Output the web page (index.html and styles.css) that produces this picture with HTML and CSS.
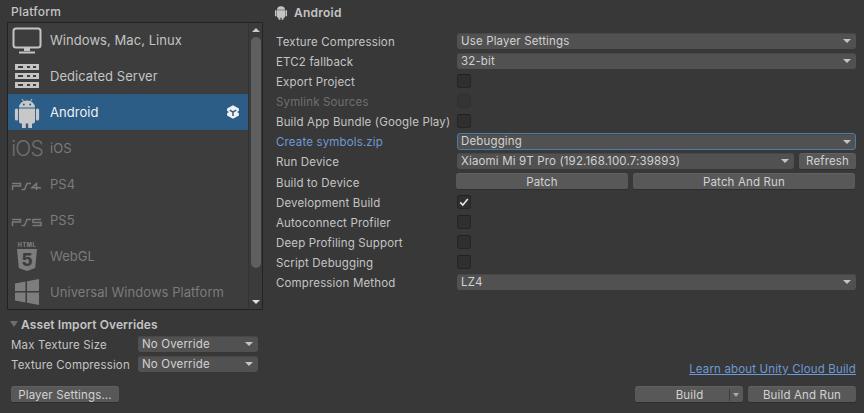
FILE: index.html
```html
<!DOCTYPE html>
<html lang="en">
<head>
<meta charset="utf-8">
<title>Build Settings</title>
<link rel="stylesheet" href="styles.css">
</head>
<body>
<div class="app">
  <aside class="left">
    <h2 class="platform-title">Platform</h2>
    <div class="list-box">
      <ul class="list">
        <li class="row">
          <svg class="ico" viewBox="0 0 32 32"><rect x="2.500" y="3.500" width="27" height="19" rx="2.500" fill="none" stroke="#c4c4c4" stroke-width="2"/><path d="M13 23h6v3h-6zM8 26.500h16v2H8z" fill="#c4c4c4"/></svg>
          <span>Windows, Mac, Linux</span>
        </li>
        <li class="row">
          <svg class="ico" viewBox="0 0 32 32" fill="#c4c4c4"><path fill-rule="evenodd" d="M4 4h24v6H4zM7 6v2h5V6zM16 6v2h3V6zM22 6v2h3V6zM4 13h24v6H4zM7 15v2h5v-2zM16 15v2h3v-2zM22 15v2h3v-2zM4 22h24v6H4zM7 24v2h5v-2zM16 24v2h3v-2zM22 24v2h3v-2z"/></svg>
          <span>Dedicated Server</span>
        </li>
        <li class="row active">
          <svg class="ico" viewBox="0 0 32 32" fill="#c8c8c8"><path d="M8 11.500a8 7 0 0 1 16 0zM8 12.500h16v13a2 2 0 0 1-2 2h-1v4a1.900 1.900 0 0 1-3.800 0v-4h-2.400v4a1.900 1.900 0 0 1-3.800 0v-4h-1a2 2 0 0 1-2-2zM5.500 12.500a1.600 1.600 0 0 1 1.600 1.600v8.800a1.600 1.600 0 0 1-3.200 0v-8.800a1.600 1.600 0 0 1 1.600-1.600zM26.500 12.500a1.600 1.600 0 0 1 1.600 1.600v8.800a1.600 1.600 0 0 1-3.200 0v-8.800a1.600 1.600 0 0 1 1.600-1.600z"/><path d="M11 3l2 3M21 3l-2 3" stroke="#c8c8c8" stroke-width="1"/><circle cx="12.800" cy="8.500" r="1" fill="#2c5d87"/><circle cx="19.200" cy="8.500" r="1" fill="#2c5d87"/></svg>
          <span>Android</span>
          <svg class="unity" viewBox="0 0 14 14"><path d="M7 .3 12.900 3.500V10.500L7 13.700 1.100 10.500V3.500z" fill="#f2f2f2"/><path d="M7 7.200V11M7 7.200 3.800 5.200M7 7.200 10.200 5.200" fill="none" stroke="#2c5d87" stroke-width="1.500"/><path d="M.8 5.700 3 7 .8 8.300zM13.200 5.700 11 7 13.200 8.300z" fill="#2c5d87"/></svg>
        </li>
        <li class="row dim">
          <span class="ios-mark">iOS</span>
          <span>iOS</span>
        </li>
        <li class="row dim">
          <svg class="ico wide" viewBox="0 0 32 10" fill="none" stroke="#7a7a7a" stroke-width="1.500"><path d="M1 1.500H9.500V4H1.500V8M20 1.500H16L13.500 7.500H10.500M25.500 8V1.500L21 5.700H30"/></svg>
          <span>PS4</span>
        </li>
        <li class="row dim">
          <svg class="ico wide" viewBox="0 0 32 10" fill="none" stroke="#7a7a7a" stroke-width="1.500"><path d="M1 1.500H9.500V4H1.500V8M20 1.500H16L13.500 7.500H10.500M30 1.500H22V4.500H30V7.500H21.500"/></svg>
          <span>PS5</span>
        </li>
        <li class="row dim">
          <svg class="ico" viewBox="0 0 32 32"><text class="html-mark" x="16" y="7" text-anchor="middle">HTML</text><path d="M6 9h20l-1.800 19L16 31l-8.200-3z" fill="#7d7d7d"/><text class="five-mark" x="16" y="26" text-anchor="middle">5</text></svg>
          <span>WebGL</span>
        </li>
        <li class="row dim">
          <svg class="ico" viewBox="0 0 32 32" fill="#7d7d7d"><path d="M4 7.500 14.500 5.500V15H4zM16 5.200 28 3V15H16zM4 16.500H14.500V26.500L4 24.500zM16 16.500H28V29L16 26.800z"/></svg>
          <span>Universal Windows Platform</span>
        </li>
      </ul>
      <div class="scrollbar">
        <span class="arrow up"></span>
        <span class="thumb"></span>
        <span class="arrow down"></span>
      </div>
    </div>
    <div class="overrides">
      <div class="fold"><span class="fold-tri"></span><strong>Asset Import Overrides</strong></div>
      <div class="ov-row"><label>Max Texture Size</label><div class="select ov"><span>No Override</span><i class="tri"></i></div></div>
      <div class="ov-row"><label>Texture Compression</label><div class="select ov"><span>No Override</span><i class="tri"></i></div></div>
    </div>
    <div class="left-foot"><button class="btn player">Player Settings...</button></div>
  </aside>

  <main class="right">
    <h2 class="target">
      <svg class="target-ico" viewBox="0 0 32 32" fill="#c4c4c4"><path d="M8 11.500a8 7 0 0 1 16 0zM8 12.500h16v13a2 2 0 0 1-2 2h-1v4h-3.800v-4h-2.400v4H11v-4h-1a2 2 0 0 1-2-2zM3.900 12.500h3.200v12H3.900zM24.900 12.500h3.200v12h-3.200z"/></svg>
      Android
    </h2>
    <div class="form">
      <div class="f-row"><label>Texture Compression</label><div class="select"><span>Use Player Settings</span><i class="tri"></i></div></div>
      <div class="f-row"><label>ETC2 fallback</label><div class="select"><span>32-bit</span><i class="tri"></i></div></div>
      <div class="f-row"><label>Export Project</label><span class="check"></span></div>
      <div class="f-row muted"><label>Symlink Sources</label><span class="check off"></span></div>
      <div class="f-row"><label>Build App Bundle (Google Play)</label><span class="check"></span></div>
      <div class="f-row"><label class="blue">Create symbols.zip</label><div class="select focus"><span>Debugging</span><i class="tri"></i></div></div>
      <div class="f-row"><label>Run Device</label><div class="select"><span>Xiaomi Mi 9T Pro (192.168.100.7:39893)</span><i class="tri"></i></div><button class="btn refresh">Refresh</button></div>
      <div class="f-row tall"><label>Build to Device</label><div class="btn-pair"><button class="btn patch">Patch</button><button class="btn patch-run">Patch And Run</button></div></div>
      <div class="f-row"><label>Development Build</label><span class="check"><svg viewBox="0 0 14 14"><path d="M3.200 7.400 5.800 10 10.800 4" fill="none" stroke="#e2e2e2" stroke-width="1.700"/></svg></span></div>
      <div class="f-row"><label>Autoconnect Profiler</label><span class="check"></span></div>
      <div class="f-row"><label>Deep Profiling Support</label><span class="check"></span></div>
      <div class="f-row"><label>Script Debugging</label><span class="check"></span></div>
      <div class="f-row"><label>Compression Method</label><div class="select"><span>LZ4</span><i class="tri"></i></div></div>
    </div>
    <div class="right-foot">
      <a class="learn" href="#">Learn about Unity Cloud Build</a>
      <div class="build-btns">
        <div class="btn build"><span class="build-label">Build</span><span class="build-sep"></span><i class="tri small"></i></div>
        <button class="btn build-run">Build And Run</button>
      </div>
    </div>
  </main>
</div>
</body>
</html>
```

FILE: styles.css
```css
* { box-sizing: border-box; }
html, body { margin: 0; padding: 0; }
body {
  width: 864px;
  height: 413px;
  overflow: hidden;
  background: #383838;
  color: #c4c4c4;
  font-family: Inter, "Liberation Sans", sans-serif;
  font-size: 11.500px;
  letter-spacing: .15px;
}
.app { display: flex; height: 413px; }

/* left column */
.left { width: 265px; margin-left: 7px; display: flex; flex-direction: column; flex: none; }
.platform-title { margin: 4px 0 0 4px; height: 18px; font-size: 12px; line-height: 16px; font-weight: 500; letter-spacing: .25px; color: #c4c4c4; }
.list-box { display: flex; width: 256px; height: 288px; border: 1px solid #232323; background: #3d3d3d; }
.list { list-style: none; margin: 0; padding: 0; flex: 1; min-width: 0; }
.row { display: flex; align-items: center; height: 36px; padding-left: 3px; font-size: 13px; letter-spacing: .05px; color: #c4c4c4; }
.row:first-child { height: 35px; }
.row:first-child span { padding-bottom: 2px; }
.row.active { background: #2c5d87; color: #f0f0f0; }
.row.dim { color: #7b7b7b; }
.ico { width: 32px; height: 32px; flex: none; margin-right: 7px; }
.ico.wide { height: 10px; margin-top: 6px; }
.unity { width: 14px; height: 14px; margin-left: auto; margin-right: 8px; }
.ios-mark { width: 32px; margin-right: 7px; font-size: 21px; font-weight: 300; letter-spacing: -.8px; text-align: center; flex: none; color: #6f6f6f; }
.html-mark { font-size: 5.500px; font-weight: 800; fill: #7d7d7d; letter-spacing: .6px; }
.five-mark { font-size: 17px; font-weight: 800; fill: #3d3d3d; }
.scrollbar { width: 14px; flex: none; position: relative; display: flex; flex-direction: column; align-items: center; background: #3b3b3b; border-left: 1px solid #333; }
.thumb { width: 10px; height: 231px; flex: none; margin-top: 1px; border-radius: 5px; background: #5f5f5f; }
.arrow { width: 0; height: 0; border-left: 4px solid transparent; border-right: 4px solid transparent; }
.arrow.up { border-bottom: 4px solid #c8c8c8; margin-top: 5px; margin-bottom: 4px; }
.arrow.down { border-top: 4px solid #e0e0e0; position: absolute; bottom: 5px; }
.overrides { margin-top: 6px; padding-left: 4px; }
.fold { display: flex; align-items: center; height: 18px; padding-bottom: 2px; margin-left: -1px; font-size: 12px; letter-spacing: .1px; color: #c4c4c4; }
.fold strong { font-weight: 600; }
.fold-tri { width: 0; height: 0; margin-right: 3px; border-left: 4px solid transparent; border-right: 4px solid transparent; border-top: 6px solid #6e6e6e; }
.ov-row { display: flex; align-items: center; height: 20px; }
.ov-row label { width: 127px; flex: none; padding-top: 2px; }
.select { flex: 1; height: 16px; display: flex; align-items: center; padding: 0 4px 1px; background: #515151; border-radius: 3px; color: #d2d2d2; box-shadow: inset 0 1px 0 #474747; line-height: 14px; white-space: nowrap; min-width: 0; }
.select.ov { flex: none; width: 120px; }
.select span { flex: 1; }
.tri { display: block; width: 0; height: 0; flex: none; margin-right: 1px; margin-top: 1px; border-left: 4px solid transparent; border-right: 4px solid transparent; border-top: 4.500px solid #c4c4c4; }
.tri.small { margin-right: 0; border-left-width: 3.500px; border-right-width: 3.500px; border-top-width: 4px; border-top-color: #aaa; }
.left-foot { margin-top: auto; margin-bottom: 10px; padding-left: 4px; }

/* buttons */
.btn { display: block; height: 17px; padding: 2px 0 0; border: 0; border-top: 1px solid #606060; border-bottom: 1px solid #2d2d2d; border-radius: 3px; background: #585858; color: #d2d2d2; font: inherit; letter-spacing: inherit; line-height: 13px; text-align: center; }
.player { width: 108px; }

/* right column */
.right { flex: 1; min-width: 0; display: flex; flex-direction: column; padding: 3px 8px 10px 4px; }
.target { display: flex; align-items: center; height: 18px; margin: 0 0 10px; font-size: 12px; font-weight: 600; letter-spacing: .25px; color: #c4c4c4; }
.target-ico { width: 16px; height: 16px; margin: 0 5px 0 -3px; }
.form { display: flex; flex-direction: column; }
.f-row { display: flex; align-items: center; height: 20px; }
.f-row.tall { height: 21px; }
.f-row label { width: 181px; flex: none; white-space: nowrap; padding-top: 2px; }
.f-row .blue { color: #6d9ad6; }
.muted label { color: #6f6f6f; }
.check { display: block; width: 14px; height: 14px; background: #2f2f2f; border: 1px solid #262626; border-top-color: #212121; border-radius: 3px; }
.check svg { display: block; width: 14px; height: 14px; margin: -1px; }
.check.off { background: #343434; border-color: #303030; }
.select.focus { border: 1px solid #4c7ca8; padding: 0 3px; height: 17px; }
.refresh { width: 57px; margin-left: 5px; flex: none; height: 17px; padding-top: 1px; }
.btn-pair { flex: 1; display: flex; gap: 5px; margin-left: -1px; }
.patch { width: 172px; }
.patch-run { flex: 1; margin-right: 1px; }
.right-foot { margin-top: auto; display: flex; flex-direction: column; align-items: flex-end; }
.learn { color: #6d9ad6; margin-bottom: 9px; line-height: 15px; }
.build-btns { display: flex; gap: 5px; }
.build { width: 108px; display: flex; align-items: center; padding: 0 4px 0 0; }
.build-label { flex: 1; text-align: center; padding: 2px 0 0 15px; }
.build-sep { width: 1px; height: 12px; background: #3d3d3d; margin: 0 3px 0 0; }
.build-run { width: 108px; }
```
